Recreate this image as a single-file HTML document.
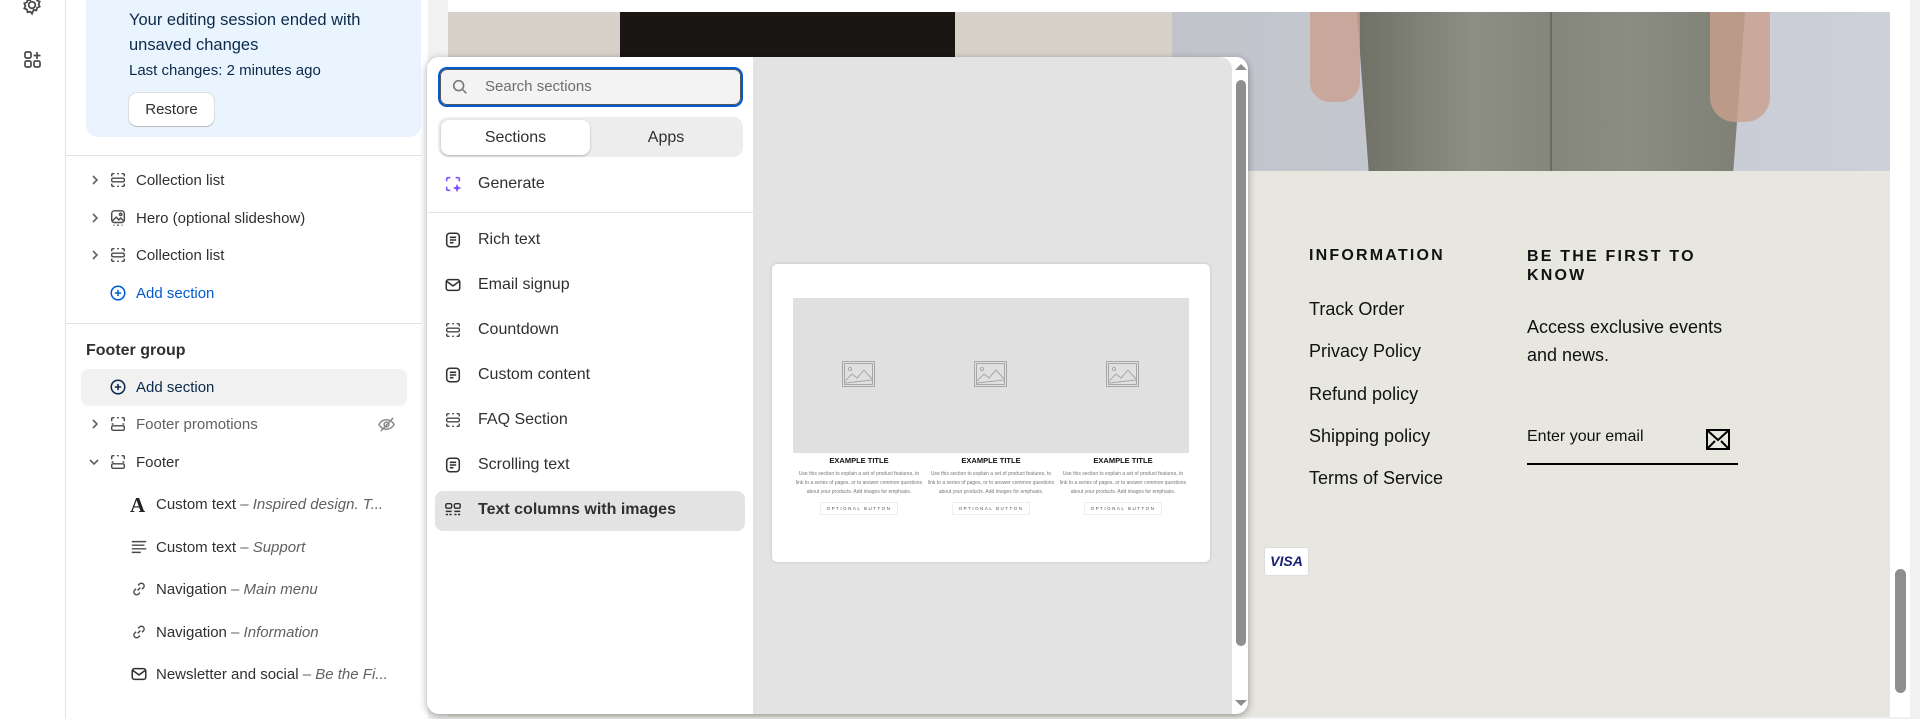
<!DOCTYPE html>
<html><head><meta charset="utf-8"><style>
*{box-sizing:border-box;margin:0;padding:0}
body{width:1920px;height:719px;overflow:hidden;background:#f1f1f1;font-family:"Liberation Sans",sans-serif;position:relative;color:#303030}
.abs{position:absolute}
.rail{left:0;top:0;width:66px;height:719px;background:#fff;border-right:1px solid #e3e3e3}
.side{left:66px;top:0;width:362px;height:719px;background:#fff}
.note{left:86px;top:0;width:335px;height:137px;background:#eaf4ff;border-radius:0 0 12px 12px}
.row{position:absolute;font-size:15px;color:#303030;display:flex;align-items:center;height:20px}
.chev{position:absolute;left:90px;width:10px;height:10px}
.ico{position:absolute;width:18px;height:18px}
.it{font-style:italic;color:#616161}
.pop{left:427px;top:57px;width:821px;height:657px;background:#fff;border-radius:12px;box-shadow:0 2px 8px rgba(0,0,0,.35)}
.li{position:absolute;left:478px;font-size:16px;color:#303030;height:22px;line-height:22px}
.lic{position:absolute;left:444px;width:18px;height:18px}
.fl{position:absolute;left:1309px;font-size:18px;color:#111}
</style></head><body>
<div class="abs rail"></div>
<svg class="abs" style="left:21px;top:-6px" width="22" height="22" viewBox="0 0 20 20" fill="none" stroke="#4a4a4a" stroke-width="1.6"><circle cx="10" cy="10" r="3"/><path d="M10 2l1.5 2 2.5-.6.6 2.5 2.4 1-1 2.3 1 2.3-2.4 1-.6 2.5-2.5-.6L10 18l-1.5-2-2.5.6-.6-2.5-2.4-1 1-2.3-1-2.3 2.4-1 .6-2.5 2.5.6z"/></svg>
<svg class="abs" style="left:23px;top:50px" width="20" height="20" viewBox="0 0 20 20" fill="none" stroke="#4a4a4a" stroke-width="1.7"><rect x="2" y="2" width="6" height="6" rx="1.5"/><rect x="2" y="11" width="6" height="6" rx="1.5"/><rect x="11" y="11" width="6" height="6" rx="1.5"/><path d="M14 2v7M10.5 5.5h7"/></svg>
<div class="abs side"></div>
<div class="abs note"></div>
<div class="abs" style="left:129px;top:8px;font-size:16.5px;line-height:25px;color:#0b2a4a;width:290px">Your editing session ended with unsaved changes</div>
<div class="abs" style="left:129px;top:62px;font-size:15px;color:#0b2a4a">Last changes: 2 minutes ago</div>
<div class="abs" style="left:129px;top:93px;width:85px;height:33px;background:#fff;border-radius:8px;box-shadow:0 1px 0 #bbb,0 0 0 1px #ddd;font-size:15px;text-align:center;line-height:33px;color:#303030">Restore</div>
<div class="abs" style="left:66px;top:155px;width:356px;height:1px;background:#e3e3e3"></div>
<div class="abs" style="left:66px;top:323px;width:356px;height:1px;background:#e3e3e3"></div>
<div class="abs" style="left:81px;top:369px;width:326px;height:37px;background:#f1f1f1;border-radius:8px"></div>

<svg width="0" height="0" style="position:absolute"><defs>
<g id="sec" fill="none" stroke="#4a4a4a" stroke-width="1.6"><path d="M3 6V4.5Q3 3 4.5 3H6M9 3h2M14 3h1.5Q17 3 17 4.5V6M3 14v1.5Q3 17 4.5 17H6M9 17h2M14 17h1.5Q17 17 17 15.5V14"/><rect x="3" y="8" width="14" height="4" rx="1.5"/></g>
<g id="ftr" fill="none" stroke="#4a4a4a" stroke-width="1.6"><path d="M3 7V4.5Q3 3 4.5 3H6M9 3h2M14 3h1.5Q17 3 17 4.5V7M3 10h2M15 10h2"/><rect x="3" y="12" width="14" height="5" rx="1.5"/></g>
<g id="chv" fill="none" stroke="#616161" stroke-width="1.6"><path d="M3 1l4 4-4 4"/></g>
<g id="doc" fill="none" stroke="#303030" stroke-width="1.7"><rect x="3" y="2.5" width="14" height="15" rx="3.5"/><path d="M6.5 7h7M6.5 10h7M6.5 13h4"/></g>
<g id="mail" fill="none" stroke="#303030" stroke-width="1.7"><rect x="2.5" y="4" width="15" height="12" rx="2.5"/><path d="M3 6l7 5 7-5"/></g>
<g id="lnk" fill="none" stroke="#4a4a4a" stroke-width="1.6"><path d="M8.5 11.5l3-3M9 6l1.5-1.5a3 3 0 014.3 4.3L13.3 10.3M11 14l-1.5 1.5a3 3 0 01-4.3-4.3L6.7 9.7"/></g>
</defs></svg>

<svg class="chev" style="top:175px" viewBox="0 0 10 10"><use href="#chv"/></svg>
<svg class="ico" style="left:109px;top:171px" viewBox="0 0 20 20"><use href="#sec"/></svg>
<div class="row" style="left:136px;top:170px">Collection list</div>
<svg class="chev" style="top:213px" viewBox="0 0 10 10"><use href="#chv"/></svg>
<svg class="ico" style="left:109px;top:209px" viewBox="0 0 20 20" fill="none" stroke="#4a4a4a" stroke-width="1.6"><rect x="3" y="2" width="14" height="13" rx="3"/><path d="M4 13l4-4 3 3 2-2 3 3"/><circle cx="13" cy="6" r="1.3"/><path d="M5 18h1M9 18h2M14 18h1"/></svg>
<div class="row" style="left:136px;top:208px">Hero (optional slideshow)</div>
<svg class="chev" style="top:250px" viewBox="0 0 10 10"><use href="#chv"/></svg>
<svg class="ico" style="left:109px;top:246px" viewBox="0 0 20 20"><use href="#sec"/></svg>
<div class="row" style="left:136px;top:245px">Collection list</div>
<svg class="ico" style="left:109px;top:284px" viewBox="0 0 20 20" fill="none" stroke="#005bd3" stroke-width="1.7"><circle cx="10" cy="10" r="7.5"/><path d="M10 6.5v7M6.5 10h7"/></svg>
<div class="row" style="left:136px;top:283px;color:#005bd3">Add section</div>
<div class="row" style="left:86px;top:341px;font-size:16px;font-weight:bold;color:#303030">Footer group</div>
<svg class="ico" style="left:109px;top:378px" viewBox="0 0 20 20" fill="none" stroke="#0b2a4a" stroke-width="1.7"><circle cx="10" cy="10" r="7.5"/><path d="M10 6.5v7M6.5 10h7"/></svg>
<div class="row" style="left:136px;top:377px;color:#0b2a4a">Add section</div>
<svg class="chev" style="top:419px" viewBox="0 0 10 10"><use href="#chv"/></svg>
<svg class="ico" style="left:109px;top:415px" viewBox="0 0 20 20"><use href="#ftr"/></svg>
<div class="row" style="left:136px;top:414px;color:#616161">Footer promotions</div>
<svg class="abs" style="left:377px;top:415px" width="19" height="19" viewBox="0 0 20 20" fill="none" stroke="#8a8a8a" stroke-width="1.6"><path d="M2 10q3-5 8-5t8 5q-3 5-8 5t-8-5z"/><circle cx="10" cy="10" r="2.5"/><path d="M4 17L17 3"/></svg>
<svg class="chev" style="top:457px;left:89px" viewBox="0 0 10 10"><path d="M1 3l4 4 4-4" fill="none" stroke="#616161" stroke-width="1.6"/></svg>
<svg class="ico" style="left:109px;top:453px" viewBox="0 0 20 20"><use href="#ftr"/></svg>
<div class="row" style="left:136px;top:452px">Footer</div>
<div class="abs" style="left:130px;top:493px;font-family:'Liberation Serif',serif;font-weight:bold;font-size:21px;color:#222">A</div>
<div class="row" style="left:156px;top:494px">Custom text&nbsp;<span class="it">– Inspired design. T...</span></div>
<svg class="ico" style="left:130px;top:538px" viewBox="0 0 20 20" fill="none" stroke="#4a4a4a" stroke-width="1.6"><path d="M2 4h16M2 8h14M2 12h16M2 16h10"/></svg>
<div class="row" style="left:156px;top:537px">Custom text&nbsp;<span class="it">– Support</span></div>
<svg class="ico" style="left:130px;top:580px" viewBox="0 0 20 20"><use href="#lnk"/></svg>
<div class="row" style="left:156px;top:579px">Navigation&nbsp;<span class="it">– Main menu</span></div>
<svg class="ico" style="left:130px;top:623px" viewBox="0 0 20 20"><use href="#lnk"/></svg>
<div class="row" style="left:156px;top:622px">Navigation&nbsp;<span class="it">– Information</span></div>
<svg class="ico" style="left:130px;top:665px" viewBox="0 0 20 20"><use href="#mail"/></svg>
<div class="row" style="left:156px;top:664px">Newsletter and social&nbsp;<span class="it">– Be the Fi...</span></div>

<!-- preview -->
<div class="abs" style="left:448px;top:0;width:1462px;height:717px;background:#fff"></div>
<div class="abs" style="left:448px;top:12px;width:724px;height:159px;background:#d7d2c9"></div>
<div class="abs" style="left:620px;top:12px;width:335px;height:159px;background:#1a1613"></div>
<div class="abs" style="left:1172px;top:12px;width:718px;height:159px;background:linear-gradient(90deg,#c2c4cc,#c8cad3 60%,#cdd0d8)"></div>
<div class="abs" style="left:1357px;top:12px;width:388px;height:159px;background:linear-gradient(90deg,#6f7066,#8e8f84 30%,#85867b 50%,#8c8d82 70%,#7e7f75);clip-path:polygon(0 0,100% 0,97% 100%,3% 100%)"></div>
<div class="abs" style="left:1550px;top:12px;width:2px;height:159px;background:#6a6b62"></div>
<div class="abs" style="left:1310px;top:12px;width:50px;height:90px;background:#c9a08e;border-radius:0 0 20px 20px;opacity:.8"></div>
<div class="abs" style="left:1710px;top:12px;width:60px;height:110px;background:#c9a08e;border-radius:0 0 25px 25px;opacity:.8"></div>
<div class="abs" style="left:448px;top:171px;width:1442px;height:546px;background:#e7e6df"></div>
<div class="abs" style="left:1895px;top:569px;width:11px;height:124px;background:#8e8e8e;border-radius:6px"></div>
<div class="abs" style="left:1309px;top:247px;font-size:16px;font-weight:bold;letter-spacing:2.2px;color:#111">INFORMATION</div>
<div class="abs" style="left:1527px;top:247px;font-size:16px;font-weight:bold;letter-spacing:2.2px;color:#111;line-height:19px">BE THE FIRST TO<br>KNOW</div>
<div class="fl" style="top:299px">Track Order</div>
<div class="fl" style="top:341px">Privacy Policy</div>
<div class="fl" style="top:384px">Refund policy</div>
<div class="fl" style="top:426px">Shipping policy</div>
<div class="fl" style="top:468px">Terms of Service</div>
<div class="fl" style="left:1527px;top:313px;line-height:28px">Access exclusive events<br>and news.</div>
<div class="abs" style="left:1527px;top:428px;font-size:16px;color:#111">Enter your email</div>
<svg class="abs" style="left:1706px;top:429px" width="24" height="21" viewBox="0 0 24 21" fill="none" stroke="#000" stroke-width="2"><rect x="1" y="1" width="22" height="19"/><path d="M1 1l11 10L23 1M1 20l8-8M23 20l-8-8"/></svg>
<div class="abs" style="left:1527px;top:463px;width:211px;height:2px;background:#000"></div>
<div class="abs" style="left:1264px;top:547px;width:45px;height:29px;background:#fff;border:1px solid #ddd;border-radius:3px;font-size:14px;font-weight:bold;font-style:italic;color:#1a1f71;text-align:center;line-height:27px">VISA</div>

<!-- popover -->
<div class="abs pop"></div>
<div class="abs" style="left:753px;top:57px;width:479px;height:657px;background:#e3e3e3;border-radius:0 12px 0 0"></div>
<div class="abs" style="left:1236px;top:80px;width:10px;height:566px;background:#8e8e8e;border-radius:5px"></div>
<div class="abs" style="left:1235px;top:64px;width:0;height:0;border-left:6px solid transparent;border-right:6px solid transparent;border-bottom:6px solid #8e8e8e"></div>
<div class="abs" style="left:1235px;top:700px;width:0;height:0;border-left:6px solid transparent;border-right:6px solid transparent;border-top:6px solid #8e8e8e"></div>
<div class="abs" style="left:438px;top:67px;width:305px;height:40px;border:2px solid #005bd3;border-radius:9px;background:#f3f3f3;box-shadow:inset 0 0 0 1px #555"></div>
<svg class="abs" style="left:451px;top:78px" width="18" height="18" viewBox="0 0 20 20" fill="none" stroke="#7a7a7a" stroke-width="1.8"><circle cx="8.5" cy="8.5" r="5.5"/><path d="M13 13l4 4"/></svg>
<div class="abs" style="left:485px;top:78px;font-size:15px;color:#6d6d6d">Search sections</div>
<div class="abs" style="left:438px;top:117px;width:305px;height:40px;background:#ededed;border-radius:10px"></div>
<div class="abs" style="left:441px;top:120px;width:149px;height:35px;background:#fff;border-radius:8px;box-shadow:0 1px 2px rgba(0,0,0,.25);font-size:16px;text-align:center;line-height:35px">Sections</div>
<div class="abs" style="left:592px;top:120px;width:148px;height:35px;font-size:16px;text-align:center;line-height:35px">Apps</div>
<svg class="lic" style="top:175px" viewBox="0 0 20 20" fill="none" stroke="#8051ff" stroke-width="1.8"><path d="M3 7V4.5Q3 3 4.5 3H7M13 3h2.5Q17 3 17 4.5V7M3 13v2.5Q3 17 4.5 17H7"/><path d="M14.5 11l1 2.5 2.5 1-2.5 1-1 2.5-1-2.5-2.5-1 2.5-1z" fill="#8051ff" stroke-width="1"/></svg>
<div class="li" style="top:173px">Generate</div>
<div class="abs" style="left:427px;top:212px;width:326px;height:1px;background:#e3e3e3"></div>
<svg class="lic" style="top:231px" viewBox="0 0 20 20"><use href="#doc"/></svg>
<div class="li" style="top:229px">Rich text</div>
<svg class="lic" style="top:276px" viewBox="0 0 20 20"><use href="#mail"/></svg>
<div class="li" style="top:274px">Email signup</div>
<svg class="lic" style="top:321px" viewBox="0 0 20 20"><use href="#sec" stroke="#303030"/></svg>
<div class="li" style="top:319px">Countdown</div>
<svg class="lic" style="top:366px" viewBox="0 0 20 20"><use href="#doc"/></svg>
<div class="li" style="top:364px">Custom content</div>
<svg class="lic" style="top:411px" viewBox="0 0 20 20"><use href="#sec"/></svg>
<div class="li" style="top:409px">FAQ Section</div>
<svg class="lic" style="top:456px" viewBox="0 0 20 20"><use href="#doc"/></svg>
<div class="li" style="top:454px">Scrolling text</div>
<div class="abs" style="left:435px;top:491px;width:310px;height:40px;background:#e3e3e3;border-radius:8px"></div>
<svg class="lic" style="top:501px" viewBox="0 0 20 20" fill="none" stroke="#303030" stroke-width="1.6"><rect x="2" y="3" width="6.5" height="5" rx="1.5"/><rect x="11.5" y="3" width="6.5" height="5" rx="1.5"/><path d="M2 11.5h6.5M11.5 11.5h6.5M2 15h2.5M6 15h2.5M11.5 15h2.5M15.5 15h2.5"/></svg>
<div class="li" style="top:499px;font-weight:bold">Text columns with images</div>

<!-- preview card -->
<div class="abs" style="left:772px;top:264px;width:438px;height:298px;background:#fff;border-radius:5px;box-shadow:0 0 3px rgba(0,0,0,.15)"></div>
<div class="abs" style="left:793px;top:298px;width:396px;height:155px;background:#e0e0e0"></div>
<svg width="0" height="0" style="position:absolute"><defs><g id="ph" fill="none" stroke="#a8a8a8" stroke-width="1"><rect x=".5" y=".5" width="32" height="25"/><rect x="2.5" y="2.5" width="28" height="21"/><circle cx="8" cy="8" r="1.6"/><path d="M3 20l7-7 5 4 7-8 8 9M3 22l27-3"/></g></defs></svg>
<svg class="abs" style="left:842px;top:361px" width="34" height="27"><use href="#ph"/></svg>
<svg class="abs" style="left:974px;top:361px" width="34" height="27"><use href="#ph"/></svg>
<svg class="abs" style="left:1106px;top:361px" width="34" height="27"><use href="#ph"/></svg>
<div class="abs" style="left:793px;top:456px;width:396px;display:flex">
 <div style="flex:1;text-align:center"><div style="font-size:7.5px;font-weight:bold;color:#111">EXAMPLE TITLE</div><div style="font-size:5px;color:#777;line-height:9px;margin-top:5px;padding:0 2px">Use this section to explain a set of product features, to link to a series of pages, or to answer common questions about your products. Add images for emphasis.</div><div style="display:inline-block;margin-top:5px;border:1px solid #eee;font-size:4.5px;letter-spacing:1.5px;padding:3px 6px;color:#555">OPTIONAL BUTTON</div></div>
 <div style="flex:1;text-align:center"><div style="font-size:7.5px;font-weight:bold;color:#111">EXAMPLE TITLE</div><div style="font-size:5px;color:#777;line-height:9px;margin-top:5px;padding:0 2px">Use this section to explain a set of product features, to link to a series of pages, or to answer common questions about your products. Add images for emphasis.</div><div style="display:inline-block;margin-top:5px;border:1px solid #eee;font-size:4.5px;letter-spacing:1.5px;padding:3px 6px;color:#555">OPTIONAL BUTTON</div></div>
 <div style="flex:1;text-align:center"><div style="font-size:7.5px;font-weight:bold;color:#111">EXAMPLE TITLE</div><div style="font-size:5px;color:#777;line-height:9px;margin-top:5px;padding:0 2px">Use this section to explain a set of product features, to link to a series of pages, or to answer common questions about your products. Add images for emphasis.</div><div style="display:inline-block;margin-top:5px;border:1px solid #eee;font-size:4.5px;letter-spacing:1.5px;padding:3px 6px;color:#555">OPTIONAL BUTTON</div></div>
</div>
</body></html>
